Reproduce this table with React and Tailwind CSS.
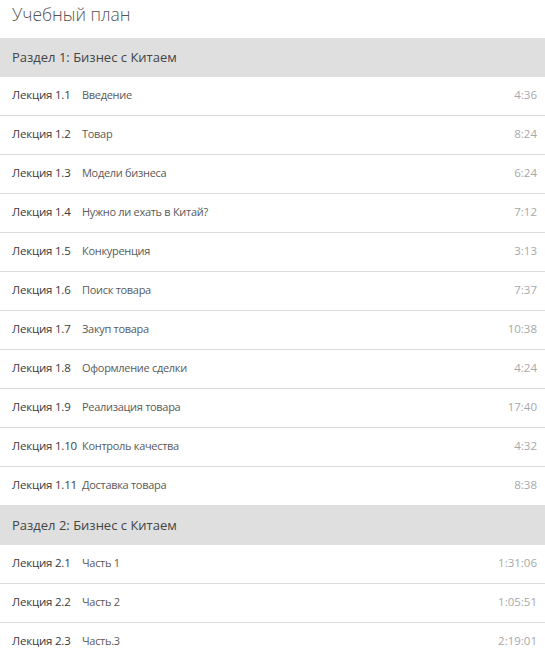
import React from "react";

const sections = [
  {
    title: "Раздел 1: Бизнес с Китаем",
    items: [
      ["1.1", "Введение", "4:36"],
      ["1.2", "Товар", "8:24"],
      ["1.3", "Модели бизнеса", "6:24"],
      ["1.4", "Нужно ли ехать в Китай?", "7:12"],
      ["1.5", "Конкуренция", "3:13"],
      ["1.6", "Поиск товара", "7:37"],
      ["1.7", "Закуп товара", "10:38"],
      ["1.8", "Оформление сделки", "4:24"],
      ["1.9", "Реализация товара", "17:40"],
      ["1.10", "Контроль качества", "4:32"],
      ["1.11", "Доставка товара", "8:38"],
    ],
  },
  {
    title: "Раздел 2: Бизнес с Китаем",
    items: [
      ["2.1", "Часть 1", "1:31:06"],
      ["2.2", "Часть 2", "1:05:51"],
      ["2.3", "Часть.3", "2:19:01"],
    ],
  },
];

export default function App() {
  return (
    <div className="w-[545px] h-[657px] overflow-hidden bg-white font-['Open_Sans',sans-serif]">
      <div className="h-[38px] pl-[12px] text-[17.5px] font-light text-[#555] leading-[28px]">
        Учебный план
      </div>
      {sections.map((s) => (
        <div key={s.title}>
          <div className="h-[39px] bg-[#dfdfdf] flex items-center pl-[12px] text-[13px] text-[#444] font-medium">
            {s.title}
          </div>
          {s.items.map(([n, t, d]) => (
            <div
              key={n}
              className="h-[39px] border-b border-[#dcdcdc] flex items-center pl-[12px] pr-[8px] pb-[3px]"
            >
              <div className="flex-1 flex items-baseline">
                <span className="w-[70px] shrink-0 whitespace-nowrap text-[11.5px] font-medium text-[#3a3a3a] tracking-[-0.2px]">
                  Лекция {n}
                </span>
                <span className="text-[11px] text-[#5a5a5a] tracking-[-0.3px] flex-1">{t}</span>
                <span className="text-[11.5px] text-[#a8a8a8]">{d}</span>
              </div>
            </div>
          ))}
        </div>
      ))}
    </div>
  );
}
